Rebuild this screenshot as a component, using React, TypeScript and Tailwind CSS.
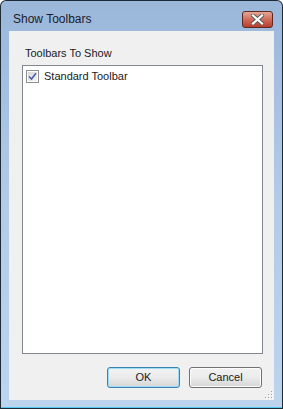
import React from "react";

function CloseX() {
  return (
    <svg width="13" height="11" viewBox="0 0 13 11">
      <path d="M2 1.5 L11 9.5 M11 1.5 L2 9.5" stroke="#5a5a5a" strokeWidth="4" strokeLinecap="square" />
      <path d="M2 1.5 L11 9.5 M11 1.5 L2 9.5" stroke="#ffffff" strokeWidth="2.2" strokeLinecap="square" />
    </svg>
  );
}

function Grip() {
  const dots = [
    [6, 0],
    [3, 3],
    [6, 3],
    [0, 6],
    [3, 6],
    [6, 6],
  ];
  return (
    <svg width="8" height="8" viewBox="0 0 8 8">
      {dots.map(([x, y], i) => (
        <g key={i}>
          <rect x={x + 1} y={y + 1} width="1" height="1" fill="#ffffff" />
          <rect x={x} y={y} width="1" height="1" fill="#a0a0a0" />
        </g>
      ))}
    </svg>
  );
}

export default function App() {
  const font = { fontFamily: '"Liberation Sans", Arial, sans-serif' };
  return (
    <div
      className="w-[283px] h-[409px] bg-[#1e2a36] p-px rounded-t-[6px] overflow-hidden"
      style={font}
    >
      <div className="w-full h-full flex flex-col rounded-t-[5px] bg-gradient-to-b from-[#9ab7da] via-[#b3cbe7] to-[#bcd4ee] border-b border-[#4fc9ee]">
        <div className="h-[30px] flex items-start justify-between pl-[12px] pr-[9px] shrink-0">
          <span className="text-[12px] text-[#1b1b2a] mt-[11px] leading-[14px]">Show Toolbars</span>
          <div className="mt-[10px] w-[31px] h-[17px] rounded-[3px] border border-[#5b2a22] bg-gradient-to-b from-[#e3a797] via-[#cf6b5a] to-[#b83d2c] flex items-center justify-center">
            <CloseX />
          </div>
        </div>
        <div className="mx-[8px] flex-1 bg-[#f0f0f0] flex flex-col relative">
          <div className="text-[11px] text-[#1a1a1a] leading-[13px] pl-[16px] pt-[16px]">Toolbars To Show</div>
          <div className="ml-[13px] mr-[11px] mt-[5px] h-[289px] bg-white border border-[#828790] pt-[4px] pl-[3px]">
            <div className="flex items-center gap-[5px]">
              <div className="w-[13px] h-[13px] border border-[#8e8f8f] bg-white p-px">
                <div className="w-full h-full bg-gradient-to-br from-[#d8d8d8] to-[#f4f4f4] flex items-center justify-center">
                  <svg width="9" height="9" viewBox="0 0 9 9">
                    <path d="M1 4.5 L3.5 7 L8 1.2" stroke="#4a5fa8" strokeWidth="1.6" fill="none" />
                  </svg>
                </div>
              </div>
              <span className="text-[11px] text-[#1a1a1a] leading-[13px]">Standard Toolbar</span>
            </div>
          </div>
          <div className="flex justify-end gap-[9px] mr-[12px] mt-[13px]">
            <button className="w-[73px] h-[21px] rounded-[3px] border border-[#3c7fb1] bg-gradient-to-b from-[#f2f2f2] via-[#ebebeb] to-[#d5d5d5] text-[11px] text-[#1a1a1a] shadow-[inset_0_0_0_1px_#9fdcf5]">
              OK
            </button>
            <button className="w-[73px] h-[21px] rounded-[3px] border border-[#707070] bg-gradient-to-b from-[#f2f2f2] via-[#ebebeb] to-[#d5d5d5] text-[11px] text-[#1a1a1a] shadow-[inset_0_0_0_1px_#fcfcfc]">
              Cancel
            </button>
          </div>
          <div className="absolute right-[1px] bottom-[1px]">
            <Grip />
          </div>
        </div>
        <div className="h-[7px] shrink-0" />
      </div>
    </div>
  );
}
